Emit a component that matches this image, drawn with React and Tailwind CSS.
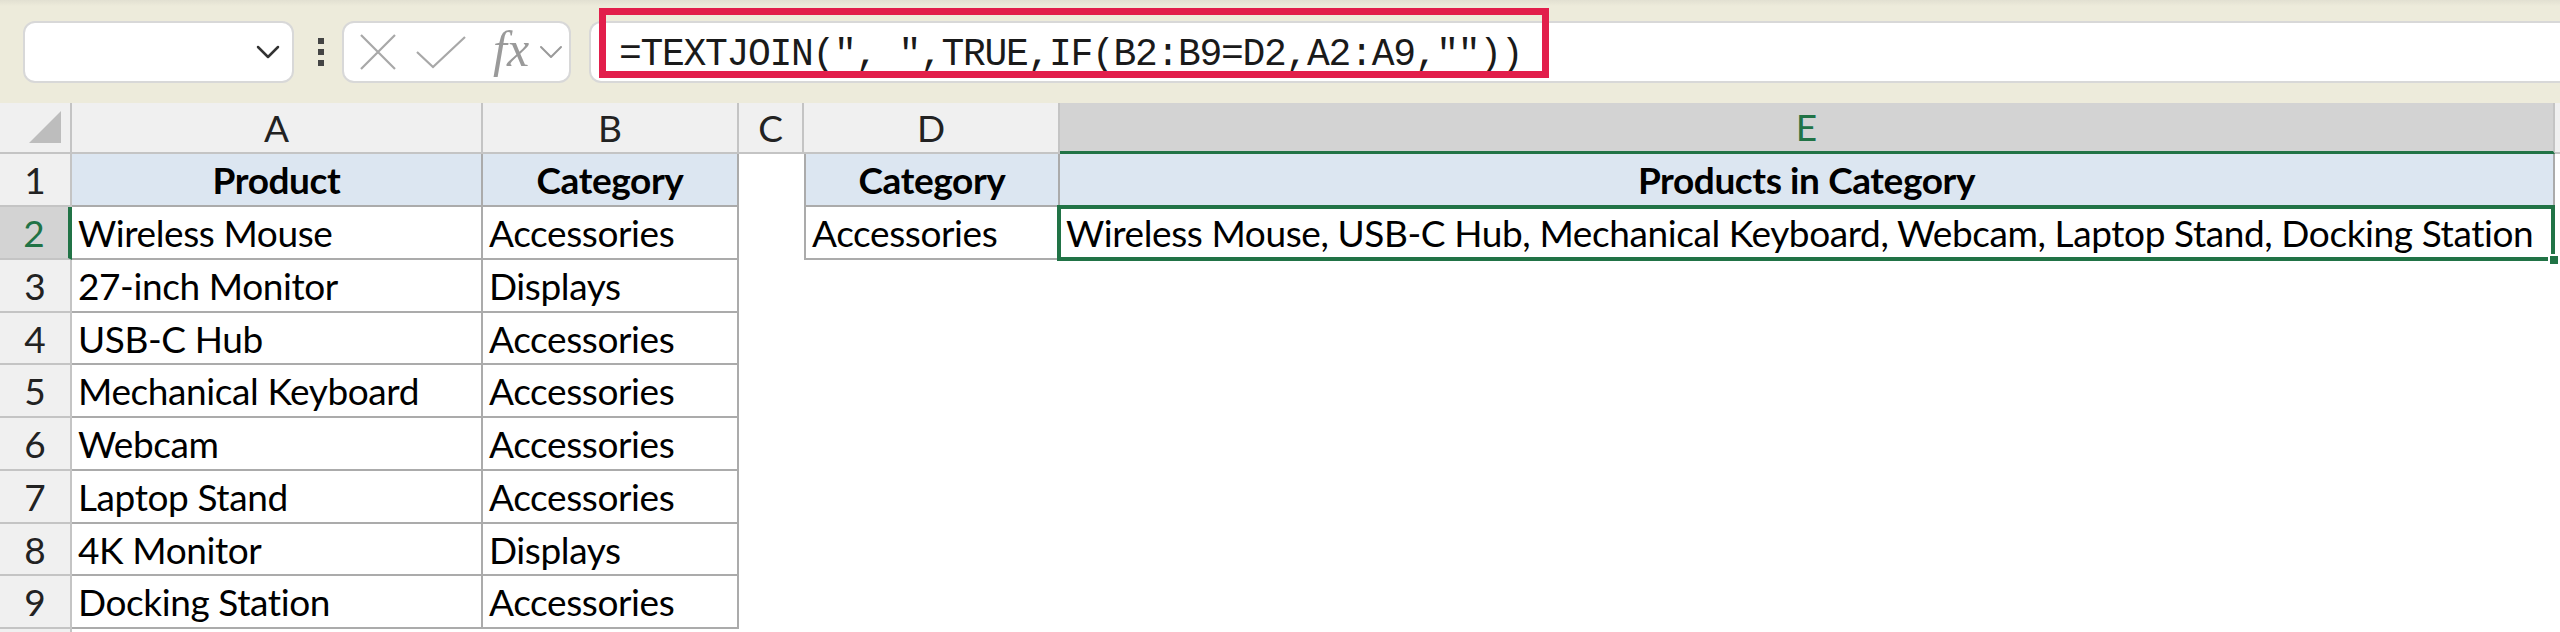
import React from "react";

const rows = [
  { a: "Product", b: "Category", d: "Category", e: "Products in Category", head: true, h: "h-[53px]" },
  { a: "Wireless Mouse", b: "Accessories", d: "Accessories", e: "Wireless Mouse, USB-C Hub, Mechanical Keyboard, Webcam, Laptop Stand, Docking Station", h: "h-[53px]", sel: true },
  { a: "27-inch Monitor", b: "Displays", h: "h-[53px]" },
  { a: "USB-C Hub", b: "Accessories", h: "h-[52px]" },
  { a: "Mechanical Keyboard", b: "Accessories", h: "h-[53px]" },
  { a: "Webcam", b: "Accessories", h: "h-[53px]" },
  { a: "Laptop Stand", b: "Accessories", h: "h-[53px]" },
  { a: "4K Monitor", b: "Displays", h: "h-[52px]" },
  { a: "Docking Station", b: "Accessories", h: "h-[53px]" },
];

function Chevron({ className = "", color = "#333", w = 2.5 }) {
  return (
    <svg viewBox="0 0 24 14" className={className} fill="none" stroke={color} strokeWidth={w} strokeLinecap="round" strokeLinejoin="round">
      <path d="M2 2 L12 12 L22 2" />
    </svg>
  );
}

function Toolbar() {
  return (
    <div className="relative h-[103px] bg-[#EDEBDB] flex items-center shrink-0">
      <div className="absolute top-0 left-0 right-0 h-[6px] bg-gradient-to-b from-[#E2E0D2] to-[#EDEBDB]" />
      {/* name box */}
      <div className="ml-[23px] w-[271px] h-[62px] bg-white border-2 border-[#D8D8D8] rounded-[12px] flex items-center justify-end pr-[12px]">
        <Chevron className="w-[24px] h-[14px]" color="#333" />
      </div>
      {/* kebab */}
      <div className="ml-[23px] w-[8px] flex flex-col items-center gap-[5px]">
        <div className="w-[6px] h-[6px] bg-[#444]" />
        <div className="w-[6px] h-[6px] bg-[#444]" />
        <div className="w-[6px] h-[6px] bg-[#444]" />
      </div>
      {/* fx box */}
      <div className="ml-[17px] w-[229px] h-[62px] bg-white border-2 border-[#D8D8D8] rounded-[12px] flex items-center pl-[15px]">
        <svg viewBox="0 0 38 38" className="w-[38px] h-[38px]" stroke="#A8A8A8" strokeWidth="2.2" fill="none">
          <path d="M2 2 L36 36 M36 2 L2 36" />
        </svg>
        <svg viewBox="0 0 52 34" className="ml-[18px] w-[52px] h-[34px]" stroke="#A8A8A8" strokeWidth="2.2" fill="none">
          <path d="M2 17 L18 32 L50 2" />
        </svg>
        <span className="ml-[26px] text-[50px] leading-none italic text-[#9A9A9A] pb-[6px]" style={{ fontFamily: '"Liberation Serif", serif' }}>
          fx
        </span>
        <Chevron className="ml-[10px] w-[24px] h-[14px]" color="#9A9A9A" w={2} />
      </div>
      {/* formula box */}
      <div className="ml-[18px] flex-1 h-[62px] bg-white border-2 border-r-0 border-[#D8D8D8] rounded-l-[12px] flex items-center pl-[28px]">
        <span className="text-[38px] leading-none text-[#1a1a1a] tracking-[-1.3px] pt-[6px]" style={{ fontFamily: '"Liberation Mono", monospace' }}>
          {'=TEXTJOIN(", ",TRUE,IF(B2:B9=D2,A2:A9,""))'}
        </span>
      </div>
      {/* highlight annotation */}
      <div className="absolute left-[599px] top-[8px] w-[950px] h-[70px] border-[7px] border-[#E21E4B] pointer-events-none" />
    </div>
  );
}

function HeaderRow() {
  const base = "h-full flex items-center justify-center border-r-2 border-b-2 border-[#C4C4C4] text-[37px] text-[#222]";
  return (
    <div className="flex h-[51px] bg-[#F0F0F0] shrink-0">
      <div className="w-[72px] h-full border-r-2 border-b-2 border-[#C4C4C4] relative">
        <svg viewBox="0 0 32 32" className="absolute right-[9px] bottom-[9px] w-[32px] h-[32px]">
          <path d="M32 0 L32 32 L0 32 Z" fill="#BDBDBD" />
        </svg>
      </div>
      <div className={`w-[411px] ${base}`}>A</div>
      <div className={`w-[256px] ${base}`}>B</div>
      <div className={`w-[65px] ${base}`}>C</div>
      <div className={`w-[256px] ${base}`}>D</div>
      <div className="w-[1495px] h-full flex items-center justify-center border-r-2 border-[#C4C4C4] bg-[#D3D3D3] border-b-[3px] border-b-[#217346] text-[37px] text-[#217346]">E</div>
      <div className="flex-1 h-full border-b-2 border-[#C4C4C4]" />
    </div>
  );
}

function DataRow({ r, i }) {
  const cell = "h-full flex items-center border-r-2 border-b-2 border-[#ABABAB] whitespace-nowrap overflow-hidden";
  const txt = r.head ? "justify-center font-bold bg-[#DCE6F1]" : "pl-[6px] bg-white";
  const inDE = i < 2;
  return (
    <div className={`flex ${r.h} shrink-0`}>
      <div
        className={`w-[72px] h-full flex items-center justify-center border-b-2 text-[37px] tracking-normal ${
          r.sel
            ? "bg-[#D3D3D3] text-[#217346] border-r-[4px] border-r-[#217346] border-b-[#C4C4C4]"
            : "bg-[#F0F0F0] text-[#222] border-r-2 border-[#C4C4C4]"
        }`}
      >
        {i + 1}
      </div>
      <div className={`w-[411px] ${cell} ${txt}`}>{r.a}</div>
      <div className={`w-[256px] ${cell} ${txt}`}>{r.b}</div>
      <div className="w-[65px] h-full bg-white" />
      {inDE ? (
        <>
          <div className={`w-[256px] border-l-2 ${cell} ${txt}`}>{r.d}</div>
          <div className={`relative w-[1495px] ${cell} ${txt} overflow-visible`}>
            {r.e}
            {r.sel && (
              <div className="absolute left-[-3px] top-[-2px] right-[-2px] bottom-[-3px] border-[4px] border-[#217346] pointer-events-none">
                <div className="absolute right-[-9px] bottom-[-9px] w-[12px] h-[12px] bg-[#217346] border-2 border-white" />
              </div>
            )}
          </div>
        </>
      ) : (
        <div className="w-[1751px] h-full bg-white" />
      )}
      <div className="flex-1 h-full bg-white" />
    </div>
  );
}

export default function App() {
  return (
    <div className="w-[2560px] h-[632px] overflow-hidden bg-white flex flex-col text-black" style={{ fontFamily: "Lato, sans-serif" }}>
      <Toolbar />
      <HeaderRow />
      <div className="text-[37px] leading-none tracking-[-0.4px]">
        {rows.map((r, i) => (
          <DataRow key={i} r={r} i={i} />
        ))}
        <div className="flex h-[10px]">
          <div className="w-[72px] h-full bg-[#F0F0F0] border-r-2 border-[#C4C4C4]" />
        </div>
      </div>
    </div>
  );
}
